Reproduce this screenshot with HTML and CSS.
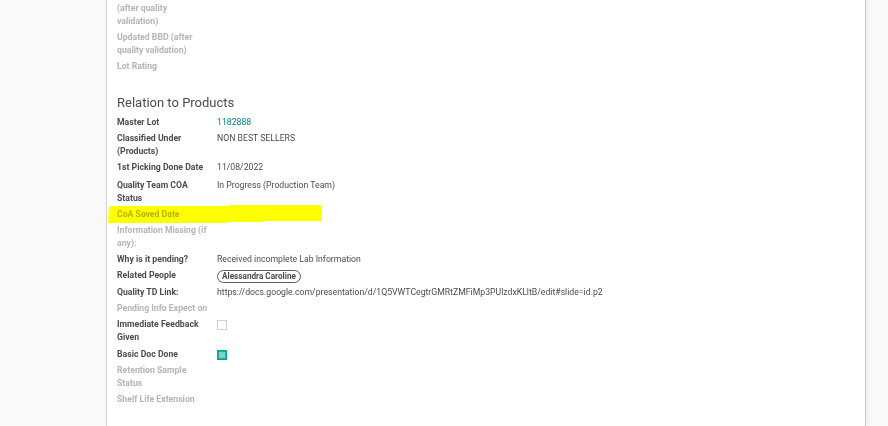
FILE: index.html
```html
<!DOCTYPE html>
<html lang="en">
<head>
    <meta charset="UTF-8">
    <title>Lot - Relation to Products</title>
    <link rel="stylesheet" href="styles.css">
</head>
<body>

    <div class="sheet">

        <div class="group group-top">
            <div class="row">
                <div class="label muted">Updated Expiry Date (after quality validation)</div>
                <div class="value"></div>
            </div>
            <div class="row">
                <div class="label muted">Updated BBD (after quality validation)</div>
                <div class="value"></div>
            </div>
            <div class="row">
                <div class="label muted">Lot Rating</div>
                <div class="value"></div>
            </div>
        </div>

        <h3 class="group-title">Relation to Products</h3>

        <div class="group">
            <div class="row">
                <div class="label">Master Lot</div>
                <div class="value"><a class="link" href="#">1182888</a></div>
            </div>
            <div class="row">
                <div class="label">Classified Under (Products)</div>
                <div class="value">NON BEST SELLERS</div>
            </div>
            <div class="row row-date">
                <div class="label">1st Picking Done Date</div>
                <div class="value">11/08/2022</div>
            </div>
            <div class="row">
                <div class="label">Quality Team COA Status</div>
                <div class="value">In Progress (Production Team)</div>
            </div>
            <div class="row highlighted">
                <div class="label muted">CoA Saved Date</div>
                <div class="value"></div>
                <svg class="marker" width="216" height="20" viewBox="0 0 216 20">
                    <polygon points="1,1 122,1 122,0 214,0 214,16 156,16 156,17 120,17 120,18 0,18" fill="#ffff00"/>
                </svg>
            </div>
            <div class="row">
                <div class="label muted">Information Missing (if any):</div>
                <div class="value"></div>
            </div>
            <div class="row">
                <div class="label">Why is it pending?</div>
                <div class="value">Received incomplete Lab Information</div>
            </div>
            <div class="row row-tags">
                <div class="label">Related People</div>
                <div class="value"><span class="tag">Alessandra Caroline</span></div>
            </div>
            <div class="row">
                <div class="label">Quality TD Link:</div>
                <div class="value">https://docs.google.com/presentation/d/1Q5VWTCegtrGMRtZMFiMp3PUlzdxKLltB/edit#slide=id.p2</div>
            </div>
            <div class="row">
                <div class="label muted">Pending Info Expect on</div>
                <div class="value"></div>
            </div>
            <div class="row row-check">
                <div class="label">Immediate Feedback Given</div>
                <div class="value"><span class="check"></span></div>
            </div>
            <div class="row">
                <div class="label">Basic Doc Done</div>
                <div class="value"><span class="check checked"></span></div>
            </div>
            <div class="row">
                <div class="label muted">Retention Sample Status</div>
                <div class="value"></div>
            </div>
            <div class="row">
                <div class="label muted">Shelf Life Extension</div>
                <div class="value"></div>
            </div>
        </div>

    </div>

</body>
</html>
```

FILE: styles.css
```css
body {
    background-color: #f9f9f9;
    margin: 0;
    font-family: Roboto, "Noto Sans", sans-serif;
    font-size: 8.7px;
    color: #4c4c4c;
    overflow: hidden;
}

.sheet {
    width: 738px;
    min-height: 437px;
    box-sizing: border-box;
    width: 760px;
    margin: -11px 0 0 106px;
    padding: 0 10px;
    background-color: #fff;
    border-left: 1px solid #d8d8d8;
    border-right: 1px solid #c8c8c8;
    box-shadow: 2px 0 6px rgba(0, 0, 0, 0.06);
}

.group-title {
    margin: 18px 0 4px 0;
    font-size: 13px;
    font-weight: normal;
    line-height: 18px;
    color: #4c4c4c;
}

.row {
    position: relative;
    display: grid;
    grid-template-columns: 100px 1fr;
    line-height: 13px;
    padding-bottom: 3px;
}

.row-date {
    padding-bottom: 5px;
}

.row-check {
    padding-bottom: 4px;
}

.label {
    font-weight: bold;
    color: #4c4c4c;
    padding-right: 9px;
}

.label.muted {
    color: #b4b4b4;
}

.value {
    white-space: nowrap;
}

.link {
    color: #00838a;
    text-decoration: none;
}

.tag {
    display: inline-block;
    border: 1px solid #5a5a5a;
    border-radius: 7px;
    padding: 0 4px;
    font-size: 8.2px;
    line-height: 11px;
    font-weight: bold;
    margin-top: 1px;
}

.check {
    display: inline-block;
    width: 8px;
    height: 8px;
    border: 1px solid #d0d0d0;
    vertical-align: middle;
}

.check.checked {
    background-color: #7fd0c8;
    border-color: #00a09d;
    box-shadow: inset 0 0 0 1px #27aaa6;
}

.marker {
    position: absolute;
    left: -9px;
    top: -3px;
    mix-blend-mode: multiply;
}
```
